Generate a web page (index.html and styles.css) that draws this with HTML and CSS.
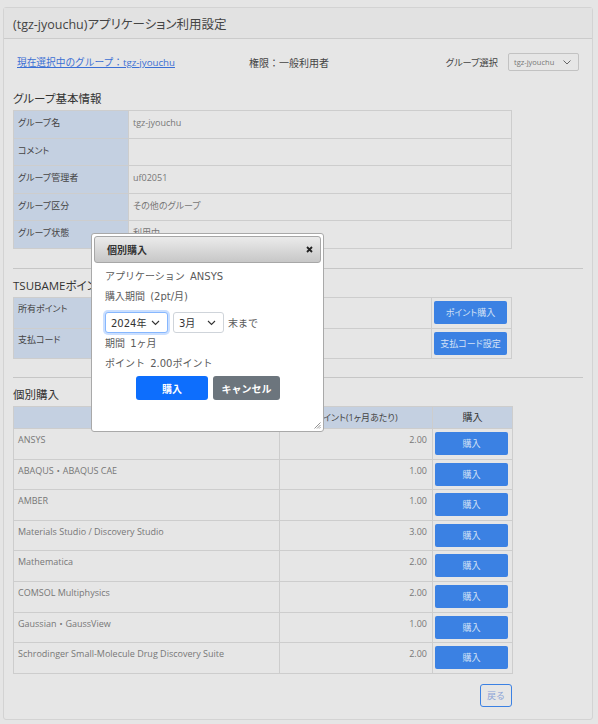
FILE: index.html
```html
<!DOCTYPE html>
<html lang="ja">
<head>
<meta charset="utf-8">
<title>アプリケーション利用設定</title>
<link rel="stylesheet" href="styles.css">
</head>
<body>
<div class="panel">
  <div class="panel-head">(tgz-jyouchu)アプリケーション利用設定</div>
  <div class="panel-body">
    <div class="topbar">
      <a class="group-link" href="#">現在選択中のグループ：tgz-jyouchu</a>
      <span class="role">権限：一般利用者</span>
      <div class="group-select">
        <span class="gs-label">グループ選択</span>
        <div class="fake-select small">
          <span>tgz-jyouchu</span>
          <svg width="8" height="5" viewBox="0 0 8 5"><path d="M0.5 0.5 L4 4 L7.5 0.5" fill="none" stroke="#666" stroke-width="1"/></svg>
        </div>
      </div>
    </div>

    <h2 class="sec-title first">グループ基本情報</h2>
    <table class="info">
      <colgroup><col class="w-label"><col></colgroup>
      <tr><th>グループ名</th><td>tgz-jyouchu</td></tr>
      <tr><th>コメント</th><td></td></tr>
      <tr><th>グループ管理者</th><td>uf02051</td></tr>
      <tr><th>グループ区分</th><td>その他のグループ</td></tr>
      <tr><th>グループ状態</th><td>利用中</td></tr>
    </table>

    <hr class="sep">
    <h2 class="sec-title">TSUBAMEポイント</h2>
    <table class="points">
      <colgroup><col class="w-label"><col><col class="w-btn"></colgroup>
      <tr class="r1"><th>所有ポイント</th><td></td><td class="btn-cell"><button class="btn-blue">ポイント購入</button></td></tr>
      <tr class="r2"><th>支払コード</th><td></td><td class="btn-cell"><button class="btn-blue">支払コード設定</button></td></tr>
    </table>

    <hr class="sep sep2">
    <h2 class="sec-title">個別購入</h2>
    <table class="apps">
      <colgroup><col class="w-name"><col class="w-pt"><col class="w-btn"></colgroup>
      <thead>
        <tr><th>アプリケーション</th><th>ポイント(1ヶ月あたり)</th><th class="h-btn">購入</th></tr>
      </thead>
      <tbody>
        <tr><td class="c-name">ANSYS</td><td class="c-pt">2.00</td><td class="c-btn"><button class="btn-blue">購入</button></td></tr>
        <tr><td class="c-name">ABAQUS・ABAQUS CAE</td><td class="c-pt">1.00</td><td class="c-btn"><button class="btn-blue">購入</button></td></tr>
        <tr><td class="c-name">AMBER</td><td class="c-pt">1.00</td><td class="c-btn"><button class="btn-blue">購入</button></td></tr>
        <tr><td class="c-name">Materials Studio / Discovery Studio</td><td class="c-pt">3.00</td><td class="c-btn"><button class="btn-blue">購入</button></td></tr>
        <tr><td class="c-name">Mathematica</td><td class="c-pt">2.00</td><td class="c-btn"><button class="btn-blue">購入</button></td></tr>
        <tr><td class="c-name">COMSOL Multiphysics</td><td class="c-pt">2.00</td><td class="c-btn"><button class="btn-blue">購入</button></td></tr>
        <tr><td class="c-name">Gaussian・GaussView</td><td class="c-pt">1.00</td><td class="c-btn"><button class="btn-blue">購入</button></td></tr>
        <tr><td class="c-name">Schrodinger Small-Molecule Drug Discovery Suite</td><td class="c-pt">2.00</td><td class="c-btn"><button class="btn-blue">購入</button></td></tr>
      </tbody>
    </table>
    <div class="back-row"><button class="btn-back">戻る</button></div>
  </div>
</div>

<div class="dialog">
  <div class="dialog-head">
    <span class="dialog-title">個別購入</span>
    <svg class="dialog-close" width="7" height="7" viewBox="0 0 7 7"><path d="M1 1 L6 6 M6 1 L1 6" stroke="#222" stroke-width="1.8"/></svg>
  </div>
  <div class="dialog-body">
    <p class="line">アプリケーション ANSYS</p>
    <p class="line">購入期間 (2pt/月)</p>
    <div class="period-row">
      <div class="fake-select year focused">
        <span>2024年</span>
        <svg width="9" height="6" viewBox="0 0 9 6"><path d="M1 1 L4.5 4.5 L8 1" fill="none" stroke="#333" stroke-width="1.1"/></svg>
      </div>
      <div class="fake-select month">
        <span>3月</span>
        <svg width="9" height="6" viewBox="0 0 9 6"><path d="M1 1 L4.5 4.5 L8 1" fill="none" stroke="#333" stroke-width="1.1"/></svg>
      </div>
      <span class="until">末まで</span>
    </div>
    <p class="line l3">期間 1ヶ月</p>
    <p class="line">ポイント 2.00ポイント</p>
    <div class="dialog-buttons">
      <button class="btn-primary">購入</button>
      <button class="btn-secondary">キャンセル</button>
    </div>
  </div>
  <svg class="resize" width="7" height="7" viewBox="0 0 7 7"><path d="M6.5 0.5 L0.5 6.5 M6.5 3 L3 6.5 M6.5 5.2 L5.2 6.5" stroke="#777" stroke-width="0.8"/></svg>
</div>
</body>
</html>
```

FILE: styles.css
```css
html, body {
  margin: 0;
  padding: 0;
}
body {
  background: #e5e5e5;
  font-family: "Open Sans", "Noto Sans CJK JP", sans-serif;
  color: #444;
  position: relative;
  width: 598px;
  height: 724px;
  overflow: hidden;
}

.panel {
  margin: 7px 5px 0 3px;
  height: 713px;
  box-sizing: border-box;
  border: 1px solid #d3d3d3;
  border-radius: 3px;
  background: #e6e6e6;
  font-feature-settings: "palt" 1;
}
.panel-head {
  height: 30px;
  border-bottom: 1px solid #cbcbcb;
  background: #e2e2e2;
  padding-left: 9px;
  display: flex;
  align-items: center;
  font-size: 12.5px;
  color: #444;
}
.panel-body {
  padding: 0 9px 0 9px;
}

.topbar {
  margin-top: 14px;
  height: 18px;
  display: grid;
  grid-template-columns: 232px 1fr auto;
  align-items: center;
  padding: 0 4px;
  font-size: 10px;
}
.group-link {
  color: #3b6fd4;
  text-decoration: underline;
  font-size: 9.7px;
  font-feature-settings: normal;
}
.role {
  color: #444;
  font-feature-settings: normal;
}
.group-select {
  display: flex;
  align-items: center;
  gap: 10px;
}
.gs-label {
  color: #444;
  font-size: 9.2px;
}
.fake-select {
  display: flex;
  align-items: center;
  justify-content: space-between;
  box-sizing: border-box;
}
.fake-select.small {
  width: 71px;
  height: 18px;
  border: 1px solid #c2c2c2;
  border-radius: 2px;
  padding: 0 7px 0 5px;
  font-size: 7.5px;
  color: #777;
}

.sec-title {
  margin: 10px 0 4px;
  height: 14px;
  line-height: 14px;
  font-size: 11.5px;
  font-weight: normal;
  color: #333;
}
.sec-title.first {
  margin-top: 21px;
}
.sep {
  margin: 19px 0 0;
  border: 0;
  border-top: 1px solid #c6c6c6;
  height: 0;
}
.sep.sep2 {
  margin-top: 18px;
}

table {
  border-collapse: collapse;
  width: 499px;
  table-layout: fixed;
  font-size: 9px;
  line-height: 13px;
}
col.w-label { width: 115px; }
col.w-btn { width: 80px; }
col.w-name { width: 266px; }
col.w-pt { width: 153px; }

table th, table td {
  box-sizing: border-box;
  border: 1px solid #cdcdcd;
  vertical-align: top;
  text-align: left;
}

.info tr {
  height: 27.6px;
}
.info th {
  background: #c4d0e1;
  font-weight: normal;
  color: #444;
  padding: 5px 4px 0;
}
.info td {
  color: #777;
  padding: 5px 4px 0;
}

.points .r1 { height: 31px; }
.points .r2 { height: 30px; }
.points th {
  background: #c4d0e1;
  font-weight: normal;
  color: #444;
  padding: 4px 4px 0;
}
.points .btn-cell {
  padding: 3px 0 0 2px;
}

.btn-blue {
  display: block;
  width: 73px;
  height: 23px;
  border: 0;
  border-radius: 2px;
  background: #3b81e3;
  color: #d4e2f6;
  font-family: inherit;
  font-feature-settings: "palt" 1;
  font-size: 9px;
  padding: 0;
  cursor: pointer;
}

.apps thead tr {
  height: 22px;
}
.apps thead th {
  background: #c4d0e1;
  font-weight: normal;
  color: #444;
  text-align: center;
  vertical-align: middle;
  font-size: 9px;
  padding: 0;
}
.apps thead th.h-btn {
  font-size: 10px;
  color: #333;
}
.apps tbody tr {
  height: 30.6px;
}
.apps tbody td.c-name {
  color: #777;
  padding: 4px 4px 0;
  font-feature-settings: normal;
}
.apps tbody td.c-pt {
  color: #777;
  text-align: right;
  padding: 4px 5px 0 0;
}
.apps tbody td.c-btn {
  padding: 3px 0 0 2px;
}

.back-row {
  width: 499px;
  margin-top: 10px;
  display: flex;
  justify-content: flex-end;
}
.btn-back {
  width: 32px;
  height: 23px;
  border: 1px solid #3b81e3;
  border-radius: 3px;
  background: transparent;
  color: #8aa3d6;
  font-family: inherit;
  font-size: 9px;
  padding: 0;
}

/* dialog */
.dialog {
  position: absolute;
  left: 91px;
  top: 233px;
  width: 233px;
  height: 199px;
  box-sizing: border-box;
  background: #fff;
  border: 1px solid #a9a9a9;
  border-radius: 3px;
  padding: 2px;
  font-family: "DejaVu Sans", "Noto Sans CJK JP", sans-serif;
}
.dialog-head {
  height: 27px;
  box-sizing: border-box;
  border: 1px solid #a7a7a7;
  border-radius: 3px;
  background: linear-gradient(#ebebeb, #c7c7c7);
  display: flex;
  align-items: center;
  justify-content: space-between;
  padding: 0 7px 0 12px;
}
.dialog-title {
  font-size: 10px;
  font-weight: bold;
  color: #333;
  font-family: "Noto Sans CJK JP", sans-serif;
}
.dialog-close {
  display: block;
}
.dialog-body {
  padding: 4px 0 0 11px;
  color: #5a5a5a;
  font-size: 10px;
}
.line {
  margin: 0;
  height: 20px;
  line-height: 20px;
  word-spacing: 2px;
}
.period-row {
  margin-top: 5px;
  display: flex;
  align-items: center;
  gap: 5px;
  height: 21px;
}
.fake-select.year,
.fake-select.month {
  height: 21px;
  background: #fff;
  border: 1px solid #cfd4da;
  border-radius: 3px;
  padding: 0 7px 0 5px;
  color: #333;
  font-size: 10px;
}
.fake-select.year {
  width: 63px;
}
.fake-select.month {
  width: 51px;
}
.fake-select.focused {
  border-color: #86b7fe;
  box-shadow: 0 0 0 2px rgba(13, 110, 253, 0.22);
}
.until {
  margin-left: -1px;
}
.line.l3 {
  margin-top: 1px;
}
.dialog-buttons {
  margin-top: 2px;
  margin-left: 31px;
  display: flex;
  gap: 5px;
}
.btn-primary,
.btn-secondary {
  height: 24px;
  border: 0;
  border-radius: 3px;
  color: #fff;
  font-family: "Noto Sans CJK JP", sans-serif;
  font-size: 10px;
  font-weight: bold;
  padding: 0;
}
.btn-primary {
  width: 72px;
  background: #0d6efd;
}
.btn-secondary {
  width: 67px;
  background: #6c757d;
}
.resize {
  position: absolute;
  right: 2px;
  bottom: 2px;
}
```
